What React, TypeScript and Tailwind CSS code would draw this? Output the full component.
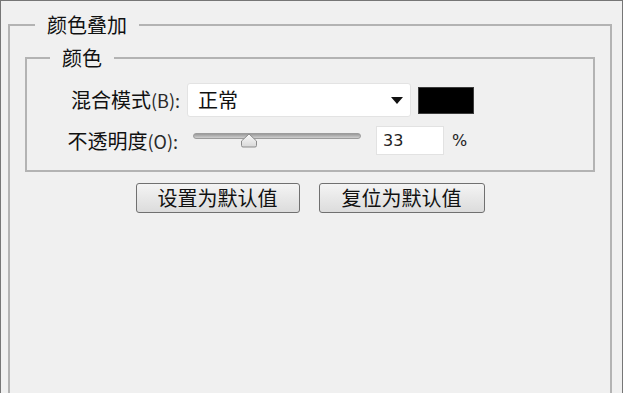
import React from "react";

const font = { fontFamily: '"Noto Sans CJK SC", "Noto Sans", sans-serif' };

function Thumb() {
  return (
    <svg width="18" height="15" viewBox="0 0 18 15" className="absolute left-[46px] top-[-1px]">
      <defs>
        <linearGradient id="tg" x1="0" y1="0" x2="0" y2="1">
          <stop offset="0" stopColor="#fbfbfb" />
          <stop offset="1" stopColor="#d8d8d8" />
        </linearGradient>
      </defs>
      <path d="M1.5 8 L9 1 L16.5 8 L16.5 12.5 Q16.5 14 15 14 L3 14 Q1.5 14 1.5 12.5 Z" fill="url(#tg)" stroke="#8c8c8c" strokeWidth="1" />
    </svg>
  );
}

export default function App() {
  return (
    <div style={font} className="w-[623px] h-[393px] overflow-hidden bg-[#f0f0f0] border-l border-t border-r border-[#767676] flex flex-col pt-[11px] pl-[7px] pr-[10px] text-[#111]">
      <fieldset className="flex-1 border-2 border-b-0 border-[#b3b3b3] flex flex-col">
        <legend className="ml-[25px] px-[12px] h-[26px] leading-[26px] text-[20px]">颜色叠加</legend>
        <fieldset className="mt-[7px] ml-[15px] mr-[15px] border-2 border-[#b3b3b3] pt-[12px] pb-[15px] flex flex-col gap-[9px]">
          <legend className="ml-[23px] px-[12px] h-[26px] leading-[26px] text-[20px]">颜色</legend>
          <div className="flex items-center h-[34px]">
            <div className="w-[153px] text-right text-[20px] leading-[34px] whitespace-nowrap">
              混合模式<span className="text-[18px] text-[#2a2a2a]">(B):</span>
            </div>
            <div className="ml-[7px] w-[224px] h-[34px] bg-white border border-[#e3e3e3] rounded-[3px] flex items-center justify-between pl-[10px] pr-[7px]">
              <span className="text-[20px] leading-none text-[#111]">正常</span>
              <svg width="12" height="7" viewBox="0 0 12 7"><path d="M0 0 H12 L6 7 Z" fill="#111" /></svg>
            </div>
            <div className="ml-[7px] w-[56px] h-[27px] bg-black border border-[#3c3c3c]" />
          </div>
          <div className="flex items-center h-[29px]">
            <div className="w-[151px] text-right text-[20px] leading-[29px] whitespace-nowrap">
              不透明度<span className="text-[18px] text-[#2a2a2a]">(O):</span>
            </div>
            <div className="ml-[9px] w-[182px] h-[29px] px-[6px] flex items-start pt-[7px]">
              <div className="relative w-[168px] h-[6px] rounded-full bg-gradient-to-b from-[#9a9a9a] to-[#d0d0d0] border border-[#9c9c9c]">
                <Thumb />
              </div>
            </div>
            <div className="ml-[7px] w-[68px] h-[29px] bg-white border border-[#e2e2e2] flex items-center pl-[6px] text-[16px] text-[#222]" style={{ fontFamily: '"DejaVu Sans", sans-serif' }}>
              33
            </div>
            <span className="ml-[8px] text-[16px] leading-none text-[#222]" style={{ fontFamily: '"DejaVu Sans", sans-serif' }}>%</span>
          </div>
        </fieldset>
        <div className="mt-[11px] flex justify-center gap-[19px]">
          <button className="w-[164px] h-[30px] rounded-[3px] border border-[#707070] bg-gradient-to-b from-[#f4f4f4] to-[#dcdcdc] text-[20px] leading-none text-[#111]">设置为默认值</button>
          <button className="w-[166px] h-[30px] rounded-[3px] border border-[#707070] bg-gradient-to-b from-[#f4f4f4] to-[#dcdcdc] text-[20px] leading-none text-[#111]">复位为默认值</button>
        </div>
      </fieldset>
    </div>
  );
}
